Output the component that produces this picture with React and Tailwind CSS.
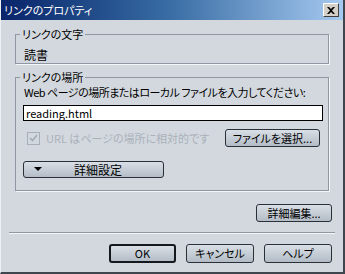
import React from 'react';

const font = { fontFamily: '"Noto Sans CJK JP", "Liberation Sans", sans-serif' };

const Btn = ({ children, className = '', def = false }) => (
  <button
    className={`flex items-center justify-center whitespace-nowrap rounded-[3px] bg-gradient-to-b from-[#d9dfe6] to-[#b3bcc6] text-[11px] leading-none text-black ${
      def ? 'border-2 border-[#15191e]' : 'border border-[#2b3037]'
    } ${className}`}
  >
    {children}
  </button>
);

const Group = ({ title, className = '', children }) => (
  <fieldset className={`mx-[14px] min-w-0 border border-[#8f98a2] px-[8px] shadow-[1px_1px_0_#f4f6f8] ${className}`}>
    <legend className="-ml-[4px] px-[2px] text-[11px] leading-[14px]">{title}</legend>
    {children}
  </fieldset>
);

export default function App() {
  return (
    <div
      className="flex h-[274px] w-[345px] flex-col overflow-hidden whitespace-nowrap border-b-2 border-r-2 border-l border-b-[#40464e] border-r-[#40464e] border-l-[#eef1f4] bg-[#d3d8de] text-black [font-feature-settings:'palt']"
      style={font}
    >
      {/* Title bar */}
      <div className="flex h-[20px] shrink-0 items-center justify-between bg-gradient-to-r from-[#0a246a] via-[#3a6ea5] to-[#a6caf0] pl-[3px] pr-[4px]">
        <span className="text-[11px] leading-none text-white">リンクのプロパティ</span>
        <div className="flex h-[14px] w-[16px] items-center justify-center border border-b-[#404040] border-r-[#404040] border-l-white border-t-white bg-[#d4d0c8]">
          <svg width="8" height="7" viewBox="0 0 8 7">
            <path d="M0 0 L2 0 L4 2 L6 0 L8 0 L5 3.5 L8 7 L6 7 L4 5 L2 7 L0 7 L3 3.5 Z" fill="#000" />
          </svg>
        </div>
      </div>

      {/* Link text */}
      <Group title="リンクの文字" className="mt-[7px] pb-[1px] pt-[7px]">
        <div className="text-[12px] leading-[14px]">読書</div>
      </Group>

      {/* Link location */}
      <Group title="リンクの場所" className="mt-[6px] pb-[12px] pt-[1px]">
        <div className="text-[11px] leading-[14px] tracking-[-0.5px]">Web ページの場所またはローカル ファイルを入力してください:</div>
        <div className="mt-[6px] flex h-[16px] w-[300px] -ml-[1px] items-center border border-black bg-white px-[2px] text-[11px] leading-none">
          reading.html
        </div>
        <div className="mt-[8px] flex items-center justify-between">
          <div className="flex items-center gap-[6px] pl-[3px]">
            <div className="flex h-[13px] w-[13px] items-center justify-center border border-[#a7afb8] bg-[#d3d8de]">
              <svg width="9" height="8" viewBox="0 0 9 8">
                <path d="M1 4 L3.5 6.5 L8 1" stroke="#a3abb4" strokeWidth="1.6" fill="none" />
              </svg>
            </div>
            <span className="text-[11px] leading-[14px] text-[#a9b1ba]">URL はページの場所に相対的です</span>
          </div>
          <Btn className="h-[18px] w-[95px]">ファイルを選択...</Btn>
        </div>
        <Btn className="mt-[14px] h-[17px] w-[141px] -ml-[1px] !justify-start">
          <svg width="8" height="5" viewBox="0 0 8 5" className="ml-[10px]">
            <path d="M0 0 L8 0 L4 4 Z" fill="#000" />
          </svg>
          <span className="ml-[32px] text-[12px]">詳細設定</span>
        </Btn>
      </Group>

      {/* Advanced edit */}
      <div className="mt-[13px] flex justify-end pr-[11px]">
        <Btn className="h-[18px] w-[76px]">詳細編集...</Btn>
      </div>

      {/* Separator */}
      <div className="mx-[8px] mt-[10px] border-b border-t border-b-[#f4f6f8] border-t-[#8f98a2]" />

      {/* Dialog buttons */}
      <div className="mt-[10px] flex justify-end gap-[10px] pr-[11px]">
        <Btn def className="h-[19px] w-[67px]">OK</Btn>
        <Btn className="h-[19px] w-[68px]">キャンセル</Btn>
        <Btn className="h-[19px] w-[68px]">ヘルプ</Btn>
      </div>
    </div>
  );
}
